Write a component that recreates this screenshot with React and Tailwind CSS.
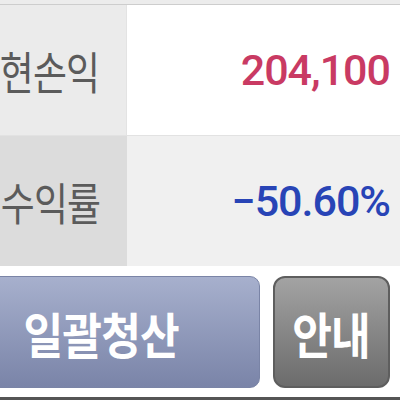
export default function App() {
  return (
    <div className="w-[400px] h-[400px] overflow-hidden bg-white flex flex-col" style={{ fontFamily: '"Noto Sans CJK KR", "Noto Sans", sans-serif' }}>
      {/* top edge */}
      <div className="h-[4px] bg-[#ececec] shrink-0" />
      <div className="h-[1px] bg-[#cdcdcd] shrink-0" />

      {/* row 1 */}
      <div className="flex h-[130px] shrink-0">
        <div className="w-[127px] bg-[#ebebeb] flex items-center justify-end pr-[27px] whitespace-nowrap border-r border-[#e3e3e3]">
          <span className="inline-block origin-right scale-x-[0.82] text-[45px] tracking-[-1px] text-[#5b5b5b] leading-none">현손익</span>
        </div>
        <div className="flex-1 bg-white flex items-center justify-end pr-[10px]">
          <span className="text-[43px] leading-none text-[#c93a63] font-medium tracking-[-1px]" style={{ fontFamily: 'Roboto, sans-serif' }}>204,100</span>
        </div>
      </div>
      <div className="h-[1px] bg-[#e2e2e2] shrink-0" />

      {/* row 2 */}
      <div className="flex h-[130px] shrink-0">
        <div className="w-[127px] bg-[#dcdcdc] flex items-center justify-end pr-[27px] whitespace-nowrap">
          <span className="inline-block origin-right scale-x-[0.82] text-[45px] tracking-[-1px] text-[#5b5b5b] leading-none">수익률</span>
        </div>
        <div className="flex-1 bg-[#f0f0f0] flex items-center justify-end pr-[10px]">
          <span className="text-[43px] leading-none text-[#2844b6] font-medium tracking-[-1px]" style={{ fontFamily: 'Roboto, sans-serif' }}>−50.60%</span>
        </div>
      </div>

      {/* buttons */}
      <div className="flex-1 flex pt-[10px] pb-[9px] gap-[13px]">
        <button className="-ml-[57px] w-[317px] shrink-0 rounded-[10px] border border-[#7a84a6] bg-gradient-to-b from-[#a7b0cd] to-[#7a84a8] flex items-center justify-center">
          <span className="inline-block scale-x-[0.88] text-[49px] font-bold text-white tracking-[-1px] leading-none">일괄청산</span>
        </button>
        <button className="w-[117px] shrink-0 rounded-[12px] border-2 border-[#5e5e5e] bg-gradient-to-b from-[#a3a3a3] to-[#6c6c6c] flex items-center justify-center">
          <span className="inline-block scale-x-[0.88] text-[49px] font-bold text-white tracking-[-1px] leading-none">안내</span>
        </button>
      </div>
      <div className="h-[3px] bg-[#555555] shrink-0" />
    </div>
  )
}
